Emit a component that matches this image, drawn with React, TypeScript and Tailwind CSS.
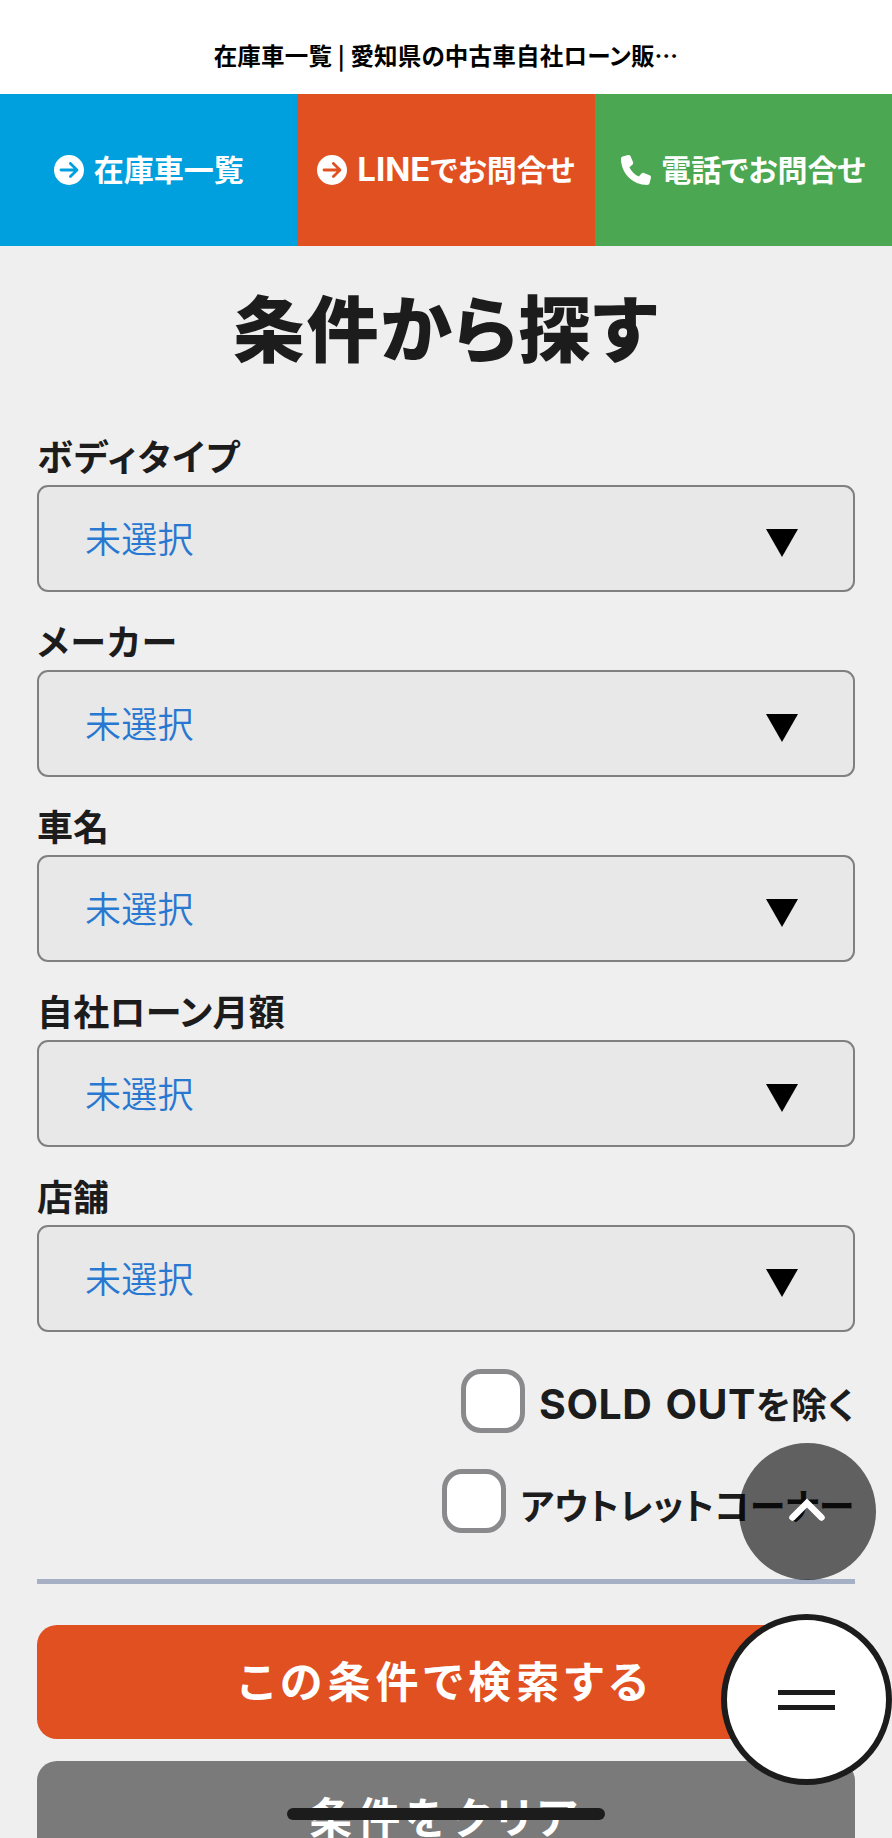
import React from 'react';
import { FaCircleArrowRight, FaPhone } from 'react-icons/fa6';

const FILTERS = [
  { label: 'ボディタイプ', spacing: 'tracking-[1.6px]' },
  { label: 'メーカー', spacing: 'tracking-[1.6px]' },
  { label: '車名', spacing: '' },
  { label: '自社ローン月額', spacing: 'tracking-[0.2px]' },
  { label: '店舗', spacing: '' },
];

interface NavLinkProps {
  icon: React.ReactNode;
  className: string;
  children: React.ReactNode;
}

function NavLink({ icon, className, children }: NavLinkProps) {
  return (
    <a
      href="#"
      className={`flex flex-1 items-center justify-center gap-[10px] whitespace-nowrap text-[30px] font-bold text-white ${className}`}
    >
      {icon}
      <span className="flex items-center pb-[4px] leading-none">{children}</span>
    </a>
  );
}

function SelectField({ label, spacing }: { label: string; spacing: string }) {
  return (
    <div>
      <label className={`flex h-[78px] items-center pt-[17px] text-[36px] font-bold leading-none ${spacing}`}>
        {label}
      </label>
      <button
        type="button"
        className="flex h-[107px] w-full items-center justify-between rounded-[11px] border-2 border-[#808080] bg-[#e8e8e8] pl-[46px] pr-[55px]"
      >
        <span className="pb-[3px] text-[36px] font-[350] leading-none tracking-[0.2px] text-[#2878d2]">未選択</span>
        <svg width="32" height="28" viewBox="0 0 32 28" className="mt-[8px]">
          <path d="M0 0h32L16 28z" fill="#000" />
        </svg>
      </button>
    </div>
  );
}

function CheckField({ children }: { children: React.ReactNode }) {
  return (
    <label className="flex h-16 items-center justify-end gap-[14px] whitespace-nowrap text-[36px] font-bold leading-none">
      <span className="size-16 shrink-0 rounded-[20px] border-[5px] border-[#8a8a8d] bg-white" />
      <span className="pt-[6px]">{children}</span>
    </label>
  );
}

export default function App() {
  return (
    <div
      lang="ja"
      className="relative h-[1838px] w-[892px] overflow-hidden bg-[#efefef] font-['Noto_Sans_CJK_JP',sans-serif] text-[#1c1c1c] [font-feature-settings:'palt']"
    >
      <header className="flex h-[94px] items-center justify-center bg-white pt-[17px] text-[23.5px] font-bold leading-none tracking-[0.2px] text-black">
        在庫車一覧 | 愛知県の中古車自社ローン販⋯
      </header>

      <nav className="flex h-[152px]">
        <NavLink icon={<FaCircleArrowRight />} className="bg-[#00a0de]">
          在庫車一覧
        </NavLink>
        <NavLink icon={<FaCircleArrowRight />} className="bg-[#e15021]">
          <span className="pt-[2px] font-['Inter'] text-[33px] font-bold">LINE</span>でお問合せ
        </NavLink>
        <NavLink icon={<FaPhone />} className="bg-[#4ba751]">
          電話でお問合せ
        </NavLink>
      </nav>

      <main className="pl-[37px] pr-[37.5px]">
        <h1 className="flex h-[161px] items-center justify-center pb-[3px] text-[72px] font-black leading-none tracking-[1.8px]">
          条件から探す
        </h1>

        <form>
          {FILTERS.map((filter) => (
            <SelectField key={filter.label} {...filter} />
          ))}

          <div className="mt-[37px] flex flex-col gap-[36px]">
            <CheckField>
              <span className="font-['Inter'] text-[41px] font-bold tracking-[0.5px] [word-spacing:3px]">SOLD OUT</span>
              <span className="tracking-[0.4px]">を除く</span>
            </CheckField>
            <CheckField>
              <span className="tracking-[0.4px]">アウトレットコーナー</span>
            </CheckField>
          </div>

          <hr className="mt-[46px] h-[5px] border-0 bg-[#a5b0c4]" />

          <button
            type="button"
            className="mt-[41px] flex h-[114px] w-full items-center justify-center rounded-[20px] bg-[#e15021] pb-[6px] text-[43px] font-bold leading-none tracking-[5.2px] text-white"
          >
            この条件で検索する
          </button>
          <button
            type="button"
            className="mt-[22px] flex h-[114px] w-full items-center justify-center rounded-[20px] bg-[#7a7a7a] pb-[6px] text-[43px] font-bold leading-none tracking-[5px] text-white"
          >
            条件をクリア
          </button>
        </form>
      </main>

      <button
        type="button"
        aria-label="ページ上部へ"
        className="absolute left-[738.5px] top-[1443px] flex size-[137px] items-center justify-center rounded-full bg-black/60 pb-[3px]"
      >
        <svg width="38" height="24" viewBox="0 0 38 24" fill="none" stroke="#fff" strokeWidth="6.5" strokeLinecap="round">
          <path d="M4.5 19.5 19 5l14.5 14.5" />
        </svg>
      </button>

      <button
        type="button"
        aria-label="メニュー"
        className="absolute left-[721px] top-[1614px] flex size-[171px] flex-col items-center justify-center gap-[10px] rounded-full border-[6.5px] border-[#1c1c1c] bg-white"
      >
        <span className="h-[5px] w-[57px] bg-[#1c1c1c]" />
        <span className="h-[5px] w-[57px] bg-[#1c1c1c]" />
      </button>

      <div className="absolute left-[287px] top-[1808px] h-3 w-[318px] rounded-full bg-[#1c1c1c]" />
    </div>
  );
}
